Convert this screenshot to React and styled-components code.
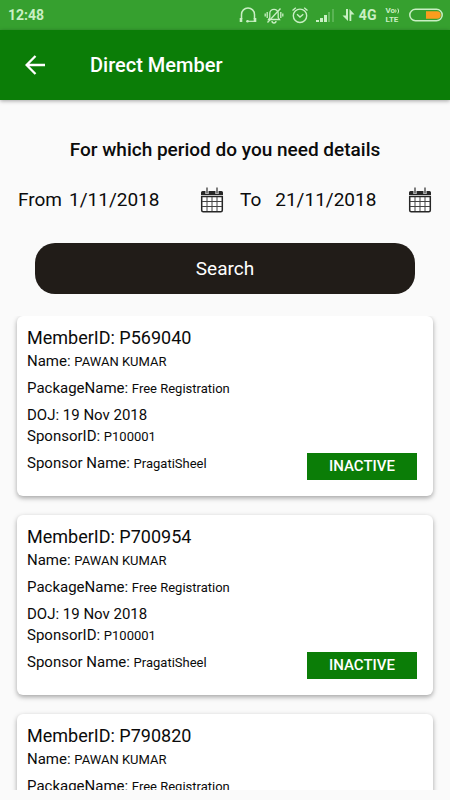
import React, { useState } from "react";
import styled, { createGlobalStyle } from "styled-components";

const members = [
    { id: "P569040", name: "PAWAN KUMAR", packageName: "Free Registration", doj: "19 Nov 2018", sponsorId: "P100001", sponsorName: "PragatiSheel", status: "INACTIVE" },
    { id: "P700954", name: "PAWAN KUMAR", packageName: "Free Registration", doj: "19 Nov 2018", sponsorId: "P100001", sponsorName: "PragatiSheel", status: "INACTIVE" },
    { id: "P790820", name: "PAWAN KUMAR", packageName: "Free Registration", doj: "19 Nov 2018", sponsorId: "P100001", sponsorName: "PragatiSheel", status: "INACTIVE" },
]

function HeadsetIcon(){
    return(
        <svg width="18" height="18" viewBox="0 0 18 18" fill="none" stroke="currentColor" strokeWidth="1.5">
            <path d="M2.5 13V8.500a6.500 6.500 0 0 1 13 0V13" />
            <path d="M2 12v4M16 12v4" strokeWidth="2.600" />
            <path d="M15.500 15.300H8" strokeWidth="1.200" />
            <circle cx="8.500" cy="15.300" r="1.300" fill="currentColor" stroke="none" />
        </svg>
    )
}

function MutedBellIcon(){
    return(
        <svg width="20" height="18" viewBox="0 0 20 18" fill="none" stroke="currentColor" strokeWidth="1.300">
            <path d="M4.500 13.500h11l-1.300-2V7.500a4.200 4.200 0 0 0-8.400 0v4z" />
            <path d="M8 15a2 2 0 0 0 4 0" />
            <path d="M3.500 16.500L16.500 2.500" />
            <path d="M3.200 6v6M1.200 7.500v3M16.800 6v6M18.800 7.500v3" />
        </svg>
    )
}

function AlarmIcon(){
    return(
        <svg width="18" height="18" viewBox="0 0 18 18" fill="none" stroke="currentColor" strokeWidth="1.400">
            <circle cx="9" cy="9.800" r="6.700" />
            <path d="M6 8.300l3 2.700 3.300-2.700" />
            <path d="M1.500 4.500L4.800 1.800M16.500 4.500L13.200 1.800" />
        </svg>
    )
}

function SignalIcon(){
    return(
        <svg width="19" height="14" viewBox="0 0 19 14" fill="currentColor">
            <rect x="0" y="12" width="3" height="2" />
            <rect x="4" y="10" width="3" height="4" />
            <rect x="8" y="7" width="3" height="7" />
            <rect x="12" y="4" width="2" height="10" opacity="0.35" />
            <rect x="16" y="1" width="2" height="13" opacity="0.25" />
        </svg>
    )
}

function DataIcon(){
    return(
        <svg width="13" height="14" viewBox="0 0 13 14" fill="currentColor">
            <path d="M4 1h2v12L0.500 7.500H4z" />
            <path d="M7.500 1L12.500 6.500H9.300V13H7.500z" />
        </svg>
    )
}

function WavesIcon(){
    return(
        <svg width="5" height="6" viewBox="0 0 5 6" fill="none" stroke="currentColor" strokeWidth="1">
            <path d="M0.500 1.500q1.200 1.500 0 3M2.800 0.500q1.800 2.500 0 5" />
        </svg>
    )
}

function BatteryIcon(){
    return(
        <svg width="34" height="14" viewBox="0 0 34 14">
            <rect x="0.800" y="1.300" width="32.400" height="11.400" rx="5.700" fill="none" stroke="#c9efc4" strokeWidth="1.500" />
            <path d="M17 3.200h11a3.800 3.800 0 0 1 0 7.600H17z" fill="#fb9d1e" />
        </svg>
    )
}

function BackIcon(){
    return(
        <svg width="20" height="20" viewBox="0 0 20 20" fill="none" stroke="currentColor" strokeWidth="2.300">
            <path d="M20 10H2M10.500 1L1.600 10l8.900 9" />
        </svg>
    )
}

function CalendarIcon(){
    return(
        <svg width="24" height="26" viewBox="0 0 24 26" fill="none">
            <path d="M1 8V5.500A1.500 1.500 0 0 1 2.500 4h19A1.500 1.500 0 0 1 23 5.500V8z" fill="#262626" />
            <path d="M1.700 9.500h20.600v13.800a1.500 1.500 0 0 1-1.500 1.500H3.200a1.500 1.500 0 0 1-1.500-1.500z" stroke="#262626" strokeWidth="1.500" fill="#fff" />
            <path d="M7 10v14M12 10v14M17 10v14M2 14.500h20M2 19.500h20" stroke="#444" />
            <path d="M7 4v3M17 4v3" stroke="#e8e8e8" strokeWidth="3.200" />
            <path d="M7 0.500v6M17 0.500v6" stroke="#555" strokeWidth="1.500" />
        </svg>
    )
}

function DateField({ id, label, value, onChange, wide }){
    return(
        <DateFieldStyled $wide={wide}>
            <label htmlFor={id}>{label}</label>
            <input id={id} type="text" value={value} onChange={(e) => onChange(e.target.value)} />
            <button type="button" aria-label={`${label} calendar`}>
                <CalendarIcon />
            </button>
        </DateFieldStyled>
    )
}

function MemberItem({ id, name, packageName, doj, sponsorId, sponsorName, status }){
    return(
        <MemberItemStyled>
            <div>
                <h2>MemberID: {id}</h2>
                <p>Name: <span>{name}</span></p>
            </div>
            <p>PackageName: <span>{packageName}</span></p>
            <div>
                <p>DOJ: {doj}</p>
                <p>SponsorID: <span>{sponsorId}</span></p>
            </div>
            <div className="item-footer">
                <p>Sponsor Name: <span>{sponsorName}</span></p>
                <StatusTag>{status}</StatusTag>
            </div>
        </MemberItemStyled>
    )
}

function App(){
    const [from, setFrom] = useState("1/11/2018")
    const [to, setTo] = useState("21/11/2018")

    return(
        <AppStyled>
            <GlobalStyle />
            <StatusBar>
                <time>12:48</time>
                <div className="status-icons">
                    <HeadsetIcon />
                    <MutedBellIcon />
                    <AlarmIcon />
                    <SignalIcon />
                    <div className="network">
                        <DataIcon />
                        <span>4G</span>
                    </div>
                    <div className="volte">
                        <div>Vo<WavesIcon /></div>
                        <div>LTE</div>
                    </div>
                    <BatteryIcon />
                </div>
            </StatusBar>
            <Toolbar>
                <button type="button" aria-label="Back"><BackIcon /></button>
                <h1>Direct Member</h1>
            </Toolbar>
            <SearchForm onSubmit={(e) => e.preventDefault()}>
                <h2>For which period do you need details</h2>
                <div className="dates">
                    <DateField id="from" label="From" value={from} onChange={setFrom} />
                    <DateField id="to" label="To" value={to} onChange={setTo} wide />
                </div>
                <SearchButton type="submit">Search</SearchButton>
            </SearchForm>
            <MemberList>
                {members.map((member) => (
                    <MemberItem key={member.id} {...member} />
                ))}
            </MemberList>
        </AppStyled>
    )
}

const GlobalStyle = createGlobalStyle`
    *{
        margin: 0;
        padding: 0;
        box-sizing: border-box;
    }
    body{
        background: #fafafa;
        color: #0b0b0b;
        font-family: Roboto, sans-serif;
    }
    button, input{
        font: inherit;
        color: inherit;
        border: none;
        background: none;
    }
    button{
        cursor: pointer;
    }
    svg{
        display: block;
        flex-shrink: 0;
    }
`;

const AppStyled = styled.div`
    display: flex;
    flex-direction: column;
    height: 100vh;
    padding-bottom: 10px;
`;

const StatusBar = styled.div`
    display: flex;
    align-items: center;
    justify-content: space-between;
    flex-shrink: 0;
    height: 30px;
    padding: 0 7px 0 8px;
    background: #36a02f;
    color: #c9efc4;
    time{
        font-size: 14px;
        font-weight: 700;
    }
    .status-icons{
        display: flex;
        align-items: center;
        gap: 7px;
    }
    .network{
        display: flex;
        align-items: center;
        gap: 4px;
        font-size: 14px;
        font-weight: 700;
    }
    .volte{
        margin: 0 2px;
        font-size: 8px;
        font-weight: 700;
        line-height: 9px;
        div{
            display: flex;
            align-items: center;
        }
    }
`;

const Toolbar = styled.header`
    display: flex;
    align-items: center;
    flex-shrink: 0;
    gap: 45px;
    height: 70px;
    padding: 0 25px;
    background: #0b7d07;
    color: #fff;
    box-shadow: 0 1px 4px rgba(0, 0, 0, 0.35);
    h1{
        font-size: 20px;
        font-weight: 500;
    }
`;

const SearchForm = styled.form`
    display: flex;
    flex-direction: column;
    flex-shrink: 0;
    padding: 38px 18px 22px;
    h2{
        font-size: 19px;
        font-weight: 500;
        line-height: 24px;
        text-align: center;
    }
    .dates{
        display: flex;
        justify-content: space-between;
        gap: 16px;
        margin: 25px 0 30px;
    }
`;

const DateFieldStyled = styled.div`
    display: flex;
    align-items: center;
    flex: ${(props) => (props.$wide ? "0 1 192px" : "0 1 206px")};
    gap: ${(props) => (props.$wide ? "14px" : "7px")};
    min-width: 0;
    font-size: 19px;
    line-height: 26px;
    input{
        flex: 1;
        min-width: 0;
    }
`;

const SearchButton = styled.button`
    height: 51px;
    margin: 0 17px;
    border-radius: 20px;
    background: #211c18;
    color: #fff;
    font-size: 19px;
`;

const MemberList = styled.main`
    display: flex;
    flex-direction: column;
    flex: 1;
    gap: 19px;
    min-height: 0;
    padding: 0 17px;
    overflow: hidden auto;
    scrollbar-width: none;
`;

const MemberItemStyled = styled.article`
    display: flex;
    flex-direction: column;
    flex-shrink: 0;
    gap: 6px;
    padding: 9px 16px 16px 10px;
    border-radius: 6px;
    background: #fff;
    box-shadow: 0 2px 5px rgba(0, 0, 0, 0.35);
    h2{
        font-size: 18px;
        font-weight: 400;
        line-height: 26px;
    }
    p{
        font-size: 15px;
        line-height: 21px;
    }
    p span{
        font-size: 13px;
    }
    .item-footer{
        display: flex;
        justify-content: space-between;
    }
`;

const StatusTag = styled.strong`
    width: 110px;
    background: #0b7d07;
    color: #fff;
    font-size: 15px;
    font-weight: 500;
    line-height: 27px;
    text-align: center;
`;

export default App
